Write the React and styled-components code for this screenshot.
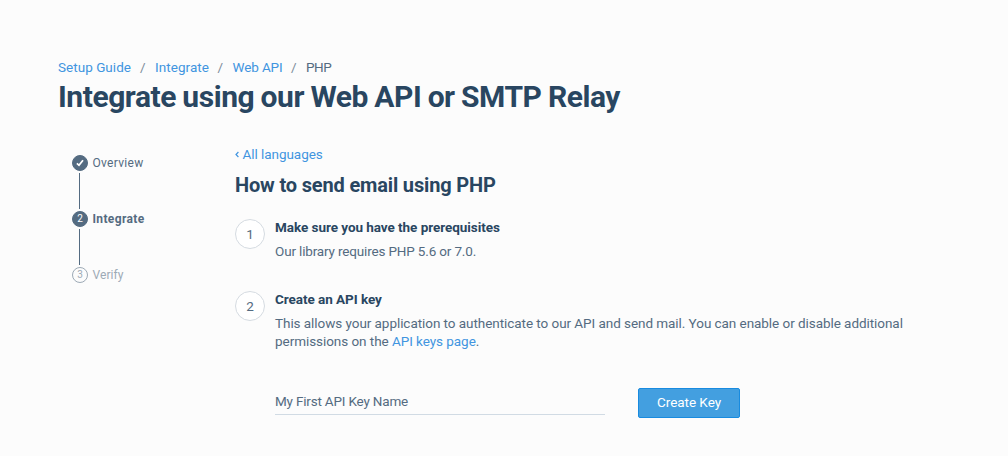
import React from 'react';
import styled, { createGlobalStyle } from 'styled-components';

const GlobalStyle = createGlobalStyle`
  * { box-sizing: border-box; }
  body {
    margin: 0;
    background: #fcfcfc;
    color: #546b81;
    font: 400 13.5px/18px Roboto, "Liberation Sans", sans-serif;
    letter-spacing: -0.05px;
  }
`;

const Page = styled.main`
  padding: 58px 58px 0;
`;

const Breadcrumbs = styled.nav`
  display: flex;
  white-space: nowrap;
`;

const Crumb = styled.span`
  width: ${p => p.$width}px;
  color: ${p => (p.$current ? '#546b81' : '#4195e0')};
  letter-spacing: ${p => p.$spacing || 0}px;
`;

const Separator = styled.span`
  width: 23.5px;
  padding-right: 1px;
  text-align: center;
  color: #7b8b99;
`;

const Title = styled.h1`
  margin: 3px 0 0;
  color: #294661;
  font-size: 30px;
  line-height: 36px;
  font-weight: 700;
  letter-spacing: -0.45px;
  word-spacing: -0.6px;
`;

const Columns = styled.div`
  display: flex;
  margin-top: 30px;
`;

const Progress = styled.ol`
  width: 177px;
  margin: 0;
  padding: 10px 0 0 14px;
  list-style: none;
`;

const ProgressItem = styled.li`
  display: flex;
  align-items: center;
  gap: 4.5px;
  height: 16px;
  font-size: 12px;
  line-height: 16px;
  font-weight: ${p => (p.$state === 'active' ? 700 : 400)};
  letter-spacing: ${p => p.$spacing}px;
  color: ${p => (p.$state === 'pending' ? '#9daab6' : '#546b81')};
`;

const Badge = styled.span`
  display: flex;
  align-items: center;
  justify-content: center;
  width: 16px;
  height: 16px;
  border: 1px solid ${p => (p.$outlined ? '#9daab6' : '#546b81')};
  border-radius: 50%;
  background: ${p => (p.$outlined ? 'transparent' : '#546b81')};
  color: ${p => (p.$outlined ? '#9daab6' : '#fff')};
  font-size: 10px;
  line-height: 14px;
  font-weight: 400;
  letter-spacing: 0;
`;

const Connector = styled.li`
  width: 1px;
  height: 36px;
  margin: 2px 0 2px 7px;
  background: #546b81;
`;

const Content = styled.section`
  width: 690px;
`;

const BackLink = styled.a`
  display: flex;
  align-items: center;
  gap: 3.5px;
  height: 18px;
  color: #4195e0;
`;

const Heading = styled.h2`
  margin: 10px 0 21px;
  color: #294661;
  font-size: 20px;
  line-height: 24px;
  font-weight: 700;
  letter-spacing: -0.16px;
`;

const Step = styled.article`
  display: flex;
  gap: 10px;
  margin-bottom: 30px;

  &:last-child { margin-bottom: 0; }
`;

const StepNumber = styled.span`
  flex: none;
  width: 30px;
  height: 30px;
  margin-top: 1px;
  border: 1px solid #d5dbe1;
  border-radius: 50%;
  background: #fff;
  line-height: 28px;
  text-align: center;
`;

const StepBody = styled.div`
  flex: 1;
`;

const StepTitle = styled.h3`
  margin: 0 0 6px;
  color: #294661;
  font-size: 13.5px;
  line-height: 18px;
  font-weight: 700;
`;

const StepText = styled.p`
  width: 640px;
  margin: 0;
  letter-spacing: ${p => p.$spacing}px;
`;

const Link = styled.a`
  color: #4195e0;
`;

const KeyForm = styled.form`
  display: flex;
  align-items: flex-start;
  gap: 33px;
  margin-top: 38px;
`;

const KeyInput = styled.input`
  width: 330px;
  height: 27px;
  padding: 0;
  border: 0;
  border-bottom: 1px solid #d1dbe4;
  background: transparent;
  color: #546b81;
  font: inherit;
  letter-spacing: -0.19px;
  outline: none;
`;

const CreateButton = styled.button`
  width: 102px;
  height: 30px;
  padding: 0 0 2px;
  border: 1px solid #188be0;
  border-radius: 2px;
  background: #439fe0;
  color: #fff;
  font: inherit;
  letter-spacing: -0.04px;
`;

export default function App() {
  return (
    <Page>
      <GlobalStyle />
      <Breadcrumbs>
        <Crumb $width={73.5} $spacing={0.03}>Setup Guide</Crumb>
        <Separator>/</Separator>
        <Crumb $width={54} $spacing={0.05}>Integrate</Crumb>
        <Separator>/</Separator>
        <Crumb $width={50} $spacing={-0.12}>Web API</Crumb>
        <Separator>/</Separator>
        <Crumb $width={26} $spacing={-0.4} $current>PHP</Crumb>
      </Breadcrumbs>
      <Title>Integrate using our Web API or SMTP Relay</Title>
      <Columns>
        <Progress>
          <ProgressItem $state="done" $spacing={0.295}>
            <Badge>
              <svg width="8" height="8" viewBox="0 0 8 8" fill="none">
                <path d="M0.9 4.4 3 6.3 7 1.3" stroke="#fff" strokeWidth="1.8" />
              </svg>
            </Badge>
            Overview
          </ProgressItem>
          <Connector />
          <ProgressItem $state="active" $spacing={0.356}>
            <Badge>2</Badge>
            Integrate
          </ProgressItem>
          <Connector />
          <ProgressItem $state="pending" $spacing={0.07}>
            <Badge $outlined>3</Badge>
            Verify
          </ProgressItem>
        </Progress>
        <Content>
          <BackLink>
            <svg width="4" height="8" viewBox="0 0 4 8" fill="none">
              <path d="M3.4 2 1 4.5 3.4 7" stroke="#4195e0" strokeWidth="1.2" />
            </svg>
            All languages
          </BackLink>
          <Heading>How to send email using PHP</Heading>
          <Step>
            <StepNumber>1</StepNumber>
            <StepBody>
              <StepTitle>Make sure you have the prerequisites</StepTitle>
              <StepText $spacing={-0.16}>Our library requires PHP 5.6 or 7.0.</StepText>
            </StepBody>
          </Step>
          <Step>
            <StepNumber>2</StepNumber>
            <StepBody>
              <StepTitle>Create an API key</StepTitle>
              <StepText $spacing={-0.055}>
                This allows your application to authenticate to our API and send mail. You can enable or
                disable additional permissions on the <Link>API keys page</Link>.
              </StepText>
              <KeyForm>
                <KeyInput defaultValue="My First API Key Name" />
                <CreateButton type="button">Create Key</CreateButton>
              </KeyForm>
            </StepBody>
          </Step>
        </Content>
      </Columns>
    </Page>
  );
}
